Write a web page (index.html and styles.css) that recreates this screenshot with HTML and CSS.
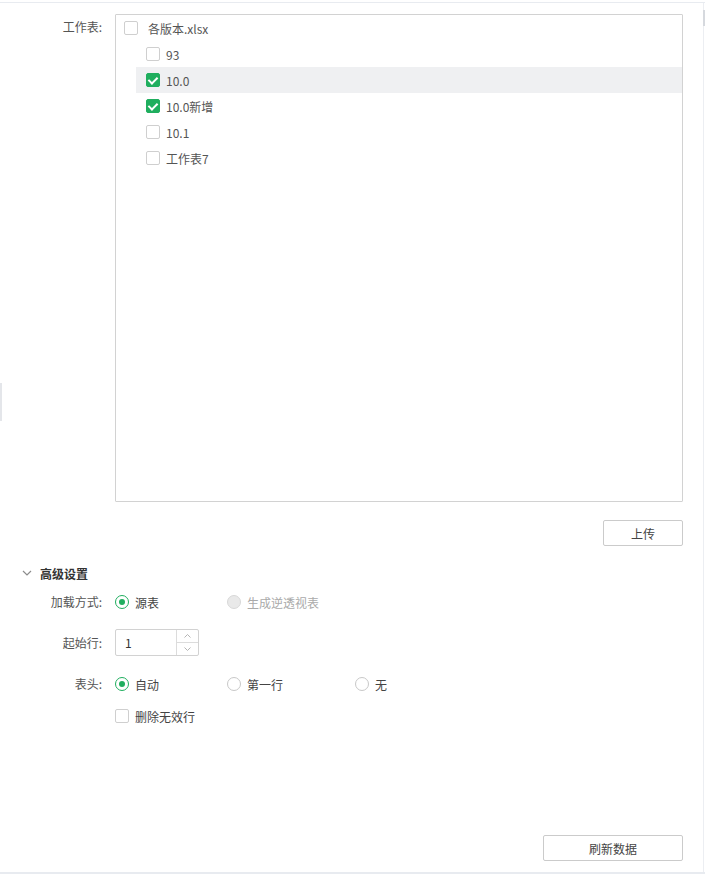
FILE: index.html
```html
<!DOCTYPE html>
<html lang="zh-CN">
<head>
  <meta charset="UTF-8" />
  <title>数据源设置</title>
  <link rel="stylesheet" href="styles.css">
</head>
<body>

  <div class="frame">
    <div class="panel">

      <!-- Sheet tree -->
      <div class="form-row sheet-row">
        <label class="form-label">工作表:</label>
        <div class="tree">
          <div class="tree-node root">
            <span class="checkbox"></span>
            <span class="node-text">各版本.xlsx</span>
          </div>
          <div class="tree-node child">
            <span class="checkbox"></span>
            <span class="node-text">93</span>
          </div>
          <div class="tree-node child hover">
            <span class="checkbox checked"></span>
            <span class="node-text">10.0</span>
          </div>
          <div class="tree-node child">
            <span class="checkbox checked"></span>
            <span class="node-text">10.0新增</span>
          </div>
          <div class="tree-node child">
            <span class="checkbox"></span>
            <span class="node-text">10.1</span>
          </div>
          <div class="tree-node child">
            <span class="checkbox"></span>
            <span class="node-text">工作表7</span>
          </div>
        </div>
      </div>

      <div class="btn-row upload-row">
        <button class="btn upload-btn">上传</button>
      </div>

      <!-- Advanced -->
      <div class="section-title">
        <svg class="chevron" width="10" height="6" viewBox="0 0 10 6">
          <path d="M1 1 L5 5 L9 1" fill="none" stroke="#8c8c8c" stroke-width="1.2" />
        </svg>
        <span>高级设置</span>
      </div>

      <div class="form-row load-row">
        <label class="form-label">加载方式:</label>
        <div class="radio-group">
          <span class="radio-item"><span class="radio checked"></span>源表</span>
          <span class="radio-item disabled"><span class="radio"></span>生成逆透视表</span>
        </div>
      </div>

      <div class="form-row start-row">
        <label class="form-label">起始行:</label>
        <div class="number-input">
          <span class="number-value">1</span>
          <span class="spinner">
            <span class="spin-btn">
              <svg width="7" height="4" viewBox="0 0 7 4"><path d="M0.5 3.5 L3.5 0.5 L6.5 3.5" fill="none" stroke="#b5b5b5" /></svg>
            </span>
            <span class="spin-btn">
              <svg width="7" height="4" viewBox="0 0 7 4"><path d="M0.5 0.5 L3.5 3.5 L6.5 0.5" fill="none" stroke="#b5b5b5" /></svg>
            </span>
          </span>
        </div>
      </div>

      <div class="form-row header-row">
        <label class="form-label">表头:</label>
        <div class="radio-group">
          <span class="radio-item"><span class="radio checked"></span>自动</span>
          <span class="radio-item"><span class="radio"></span>第一行</span>
          <span class="radio-item"><span class="radio"></span>无</span>
        </div>
      </div>

      <div class="form-row check-row">
        <label class="form-label"></label>
        <span class="check-item"><span class="checkbox"></span>删除无效行</span>
      </div>

      <div class="btn-row refresh-row">
        <button class="btn refresh-btn">刷新数据</button>
      </div>

      <span class="scroll-thumb"></span>
      <span class="side-tab"></span>
    </div>
  </div>

</body>
</html>
```

FILE: styles.css
```css
/* --- base --- */
* { margin: 0; padding: 0; box-sizing: border-box; }
body {
  background: #fff;
  color: #333;
  font-family: "Noto Sans CJK SC", "Noto Sans", sans-serif;
  font-size: 12px;
}

.frame {
  margin-top: 2px;
  border-top: 1px solid #e8ebf0;
  border-bottom: 2px solid #e8ebf0;
  width: 705px;
}
.panel {
  position: relative;
  height: 869px;
  width: 704px;
  border-right: 1px solid #eceef2;
  padding-top: 11px;
  display: flex;
  flex-direction: column;
}

/* --- form rows --- */
.form-row {
  display: flex;
  align-items: center;
}
.form-label {
  width: 102px;
  flex: none;
  text-align: right;
  color: #555;
  margin-right: 13px;
  line-height: 26px;
}
.sheet-row { align-items: flex-start; }

/* --- tree --- */
.tree {
  width: 568px;
  height: 488px;
  border: 1px solid #d2d2d2;
  border-radius: 1px;
}
.tree-node {
  display: flex;
  align-items: center;
  height: 26px;
  color: #555;
}
.tree-node.root { padding-left: 8px; }
.tree-node.root .checkbox { margin-right: 10px; }
.tree-node.child {
  margin-left: 20px;
  padding-left: 10px;
}
.tree-node.child .checkbox { margin-right: 6px; }
.tree-node.hover { background: #eff0f2; }

.checkbox {
  width: 14px;
  height: 14px;
  border: 1px solid #cfcfcf;
  border-radius: 2px;
  background: #fff;
  flex: none;
  position: relative;
}
.checkbox.checked {
  background: #1fae5e;
  border-color: #1fae5e;
}
.checkbox.checked::after {
  content: '';
  position: absolute;
  left: 3px;
  top: 1px;
  width: 4px;
  height: 7px;
  border: solid #fff;
  border-width: 0 2px 2px 0;
  transform: rotate(45deg);
}

/* --- buttons --- */
.btn-row {
  display: flex;
  justify-content: flex-end;
  padding-right: 20px;
}
.btn {
  height: 26px;
  background: #fff;
  border: 1px solid #cbcbcb;
  border-radius: 2px;
  font-family: inherit;
  font-size: 12px;
  color: #444;
}
.upload-row { margin-top: 18px; }
.upload-btn { width: 80px; }
.refresh-row {
  margin-top: auto;
  margin-bottom: 11px;
}
.refresh-btn { width: 140px; }

/* --- advanced section --- */
.section-title {
  display: flex;
  align-items: center;
  height: 20px;
  margin-top: 17px;
  padding-left: 22px;
  font-weight: bold;
  color: #333;
}
.chevron { margin-right: 8px; }

.load-row { margin-top: 6px; }
.start-row { margin-top: 14px; }
.header-row { margin-top: 15px; }
.check-row { margin-top: 6px; }

.radio-group { display: flex; }
.radio-item {
  display: flex;
  align-items: center;
  width: 112px;
  color: #444;
}
.radio-item:nth-child(2) { width: 128px; }
.radio {
  width: 14px;
  height: 14px;
  border: 1px solid #c8c8c8;
  border-radius: 50%;
  margin-right: 6px;
  position: relative;
  background: #fff;
}
.radio.checked { border-color: #1fae5e; }
.radio.checked::after {
  content: '';
  position: absolute;
  left: 3px;
  top: 3px;
  width: 6px;
  height: 6px;
  border-radius: 50%;
  background: #1fae5e;
}
.radio-item.disabled { color: #aaa; }
.radio-item.disabled .radio {
  background: #e9e9e9;
  border-color: #d8d8d8;
}

.check-item {
  display: flex;
  align-items: center;
  height: 26px;
  color: #444;
}
.check-item .checkbox { margin-right: 6px; }

/* --- number input --- */
.number-input {
  display: flex;
  width: 84px;
  height: 27px;
  border: 1px solid #d2d2d2;
  border-radius: 2px;
}
.number-value {
  flex: 1;
  padding-left: 9px;
  line-height: 25px;
  color: #333;
}
.spinner {
  width: 22px;
  border-left: 1px solid #dcdcdc;
  display: flex;
  flex-direction: column;
}
.spin-btn {
  flex: 1;
  display: flex;
  align-items: center;
  justify-content: center;
}
.spin-btn + .spin-btn { border-top: 1px solid #dcdcdc; }

/* --- edge bits --- */
.scroll-thumb {
  position: absolute;
  right: -2px;
  top: 7px;
  width: 2px;
  height: 16px;
  background: #d6d9de;
}
.side-tab {
  position: absolute;
  left: 0;
  top: 380px;
  width: 2px;
  height: 38px;
  background: #e4e6ea;
}
```
